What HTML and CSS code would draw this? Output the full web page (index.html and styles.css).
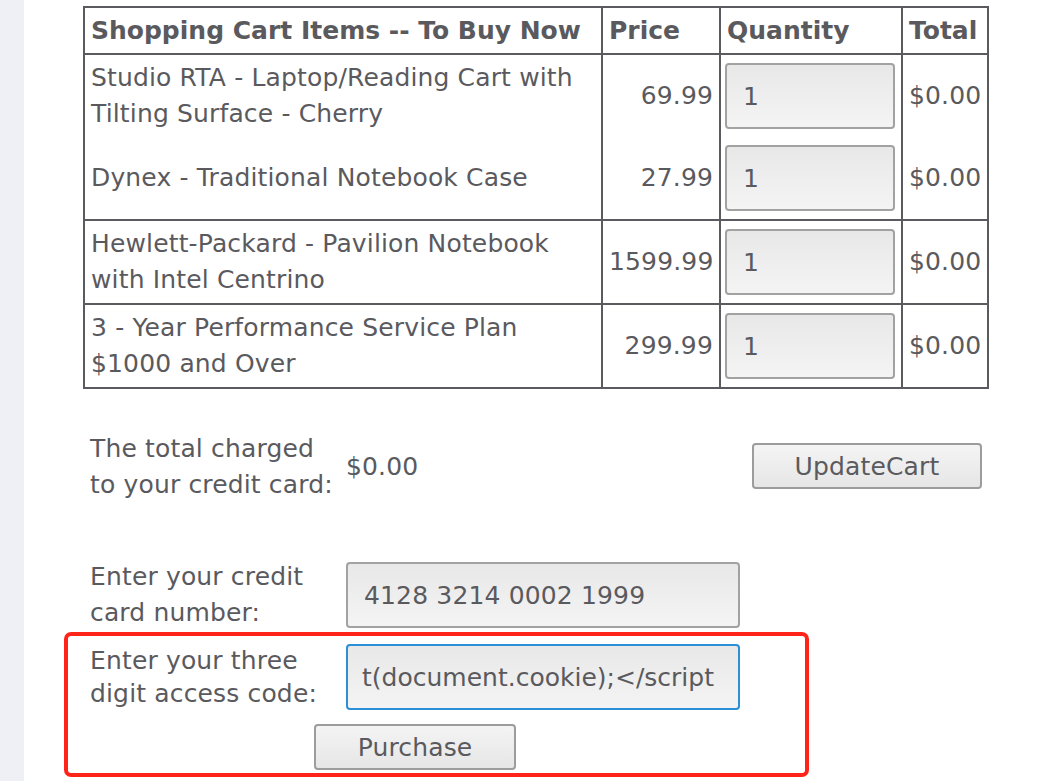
FILE: index.html
```html
<!DOCTYPE html>
<html>
<head>
<meta charset="utf-8">
<link rel="stylesheet" href="styles.css">
<title>Shopping Cart</title>
</head>
<body>
<div class="page">
  <div class="strip"></div>
  <main class="content">
    <table class="cart">
      <colgroup>
        <col class="c-item"><col class="c-price"><col class="c-qty"><col class="c-total">
      </colgroup>
      <thead>
        <tr>
          <th>Shopping Cart Items -- To Buy Now</th>
          <th>Price</th>
          <th>Quantity</th>
          <th>Total</th>
        </tr>
      </thead>
      <tbody>
        <tr class="joined">
          <td>Studio RTA - Laptop/Reading Cart with Tilting Surface - Cherry</td>
          <td class="num">69.99</td>
          <td class="qty"><input class="field qty-field" type="text" value="1"></td>
          <td>$0.00</td>
        </tr>
        <tr>
          <td>Dynex - Traditional Notebook Case</td>
          <td class="num">27.99</td>
          <td class="qty"><input class="field qty-field" type="text" value="1"></td>
          <td>$0.00</td>
        </tr>
        <tr>
          <td>Hewlett-Packard - Pavilion Notebook with Intel Centrino</td>
          <td class="num">1599.99</td>
          <td class="qty"><input class="field qty-field" type="text" value="1"></td>
          <td>$0.00</td>
        </tr>
        <tr>
          <td>3 - Year Performance Service Plan $1000 and Over</td>
          <td class="num">299.99</td>
          <td class="qty"><input class="field qty-field" type="text" value="1"></td>
          <td>$0.00</td>
        </tr>
      </tbody>
    </table>

    <div class="checkout">
      <div class="row total-row">
        <div class="label">The total charged<br>to your credit card:</div>
        <div class="value">$0.00</div>
        <div class="side"><button class="btn update-btn" type="button">UpdateCart</button></div>
      </div>
      <div class="row card-row">
        <div class="label">Enter your credit<br>card number:</div>
        <div class="value"><input class="field wide-field" type="text" value="4128 3214 0002 1999"></div>
      </div>
      <div class="highlight-zone">
        <div class="row code-row">
          <div class="label tight">Enter your three<br>digit access code:</div>
          <div class="value"><input class="field wide-field focused" type="text" value="t(document.cookie);&lt;/script"></div>
        </div>
        <div class="purchase-row">
          <button class="btn purchase-btn" type="button">Purchase</button>
        </div>
        <div class="annotation"></div>
      </div>
    </div>
  </main>
</div>
</body>
</html>
```

FILE: styles.css
```css
html, body {
  margin: 0;
  padding: 0;
  background: #ffffff;
}

body {
  font-family: "DejaVu Sans", "Liberation Sans", sans-serif;
  font-size: 25px;
  letter-spacing: 0.15px;
  color: #5a5a5e;
}

.page {
  display: flex;
  min-height: 781px;
}

.strip {
  width: 24px;
  flex: none;
  background: #eff0f5;
}

.content {
  padding: 6px 0 0 59px;
  flex: 1;
}

.cart {
  border-collapse: collapse;
  table-layout: fixed;
  width: 904px;
  border: 2px solid #5a5a5f;
}

.c-item { width: 518px; }
.c-price { width: 118px; }
.c-qty { width: 182px; }
.c-total { width: 86px; }

.cart th,
.cart td {
  border: 2px solid #5a5a5f;
  text-align: left;
  vertical-align: middle;
  line-height: 36px;
  padding: 0 6px 0 6px;
}

.cart th {
  height: 45px;
  font-weight: bold;
  letter-spacing: 0;
}

.cart td {
  height: 82px;
}

.cart tr.joined td {
  border-bottom: none;
}
.cart tr.joined + tr td {
  border-top: none;
}

.cart td.num {
  text-align: right;
}

.cart td.qty {
  padding: 0 4px;
}

.field {
  box-sizing: border-box;
  font-family: "DejaVu Sans", "Liberation Sans", sans-serif;
  font-size: 25px;
  letter-spacing: 0.15px;
  color: #5a5a5e;
  border: 2px solid #a2a2a2;
  border-radius: 4px;
  background: linear-gradient(#e8e8e8, #f4f4f4);
  padding: 0 0 0 16px;
  outline: none;
  display: block;
}

.qty-field {
  width: 170px;
  height: 66px;
}

.wide-field {
  width: 394px;
  height: 66px;
}

.field.focused {
  border-color: #2d8fd5;
  padding-left: 14px;
  letter-spacing: 0;
}

.checkout {
  padding: 42px 0 0 7px;
  width: 898px;
}

.row {
  display: grid;
  grid-template-columns: 256px 394px 1fr;
  align-items: center;
}

.label {
  line-height: 36px;
}

.label.tight {
  line-height: 33px;
}

.value {
  line-height: 36px;
}

.side {
  display: flex;
  justify-content: flex-start;
}

.card-row {
  margin-top: 56px;
}

.btn {
  font-family: "DejaVu Sans", "Liberation Sans", sans-serif;
  font-size: 25px;
  letter-spacing: 0.15px;
  color: #5a5a5e;
  border: 2px solid #9c9c9c;
  border-radius: 4px;
  background: linear-gradient(#f4f4f4, #e6e6e6);
  height: 46px;
  padding: 0;
}

.update-btn {
  width: 230px;
  margin-left: 12px;
  margin-top: -2px;
}

.highlight-zone {
  position: relative;
  margin-top: 13px;
}

.purchase-row {
  width: 650px;
  display: flex;
  justify-content: center;
  margin-top: 14px;
}

.purchase-btn {
  width: 202px;
}

.annotation {
  position: absolute;
  left: -26px;
  top: -12px;
  width: 745px;
  height: 145px;
  box-sizing: border-box;
  border: 4px solid #ff2419;
  border-radius: 7px;
  pointer-events: none;
}
```
